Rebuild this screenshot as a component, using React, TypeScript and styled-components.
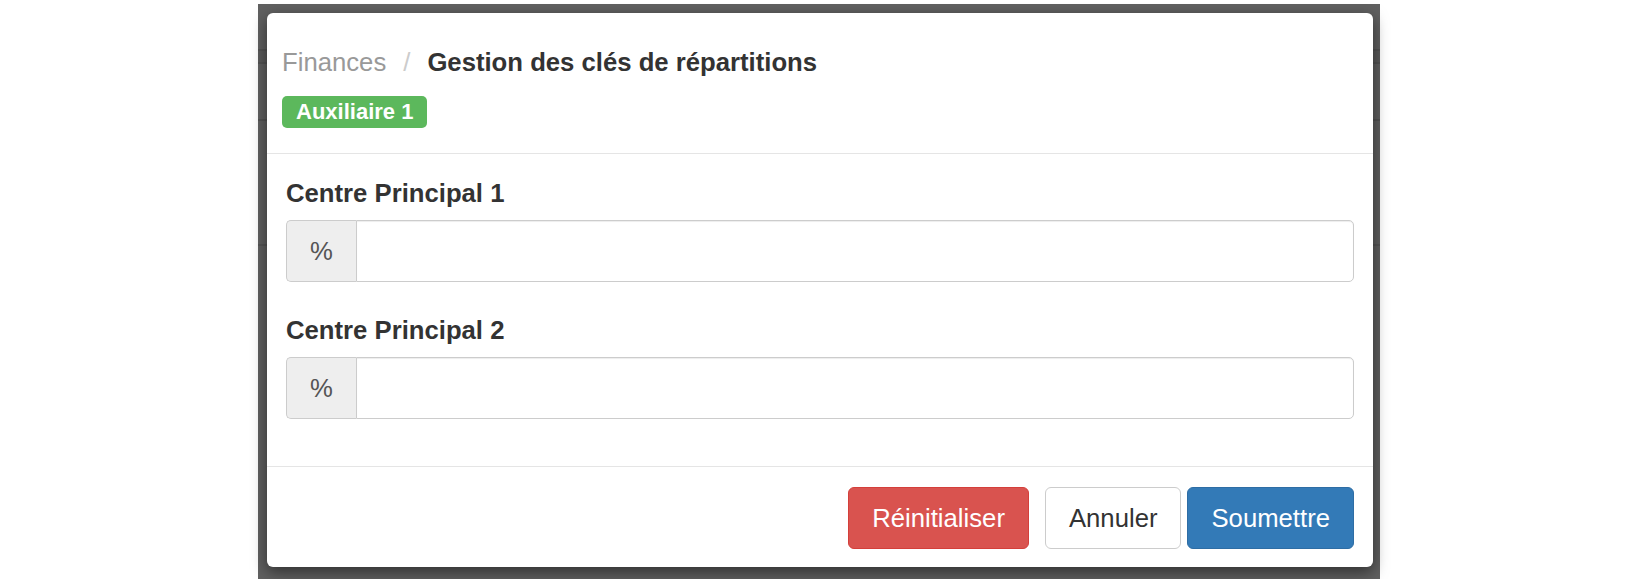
import React from 'react';
import styled, { createGlobalStyle } from 'styled-components';

const GlobalStyle = createGlobalStyle`
  html, body {
    margin: 0;
    padding: 0;
    background: #fff;
  }
  body {
    font-family: "Liberation Sans", Arial, Helvetica, sans-serif;
    color: #333;
  }
  * {
    box-sizing: border-box;
  }
`;

const Page = styled.div`
  padding: 4px 0 0 258px;
  width: 1380px;
`;

// dark backdrop with the faint lines of the page underneath
const Backdrop = styled.div`
  width: 1122px;
  height: 575px;
  padding: 9px 7px 0 9px;
  background:
    linear-gradient(to bottom,
      transparent 45px, #535353 45px, #535353 47px,
      #5a5a5a 47px, #5a5a5a 58px,
      #535353 58px, #535353 60px, transparent 60px,
      transparent 115px, #535353 115px, #535353 117px, transparent 117px,
      transparent 240px, #555 240px, #555 242px, transparent 242px),
    #606060;
`;

const Modal = styled.div`
  background: #fff;
  border-radius: 6px;
  height: 554px;
  box-shadow: 0 5px 15px rgba(0, 0, 0, 0.5);
  display: flex;
  flex-direction: column;
`;

const Header = styled.div`
  padding: 35px 15px 25px;
  border-bottom: 1px solid #e5e5e5;
`;

const Breadcrumb = styled.div`
  display: flex;
  align-items: center;
  height: 28px;
  font-size: 25.7px;
  line-height: 28px;
`;

const Crumb = styled.span<{ $active?: boolean }>`
  color: ${p => (p.$active ? '#333' : '#999')};
  font-weight: ${p => (p.$active ? 700 : 400)};
`;

const Separator = styled.span`
  color: #ccc;
  padding: 0 17px;
`;

const Badge = styled.span`
  display: inline-block;
  margin-top: 20px;
  height: 32px;
  line-height: 32px;
  padding: 0 14px;
  background: #5cb85c;
  color: #fff;
  font-size: 22px;
  font-weight: 700;
  border-radius: 5px;
`;

const Body = styled.div`
  flex: 1;
  padding: 25px 19px 0;
`;

const Field = styled.div`
  & + & {
    margin-top: 34px;
  }
`;

const Label = styled.label`
  display: block;
  font-size: 25.7px;
  line-height: 28px;
  font-weight: 700;
  color: #333;
  margin-bottom: 13px;
`;

const InputGroup = styled.div`
  display: flex;
  height: 62px;
`;

const Addon = styled.span`
  width: 70px;
  flex: none;
  display: flex;
  align-items: center;
  justify-content: center;
  background: #eee;
  border: 1px solid #ccc;
  border-right: none;
  border-radius: 5px 0 0 5px;
  color: #555;
  font-size: 25.7px;
`;

const Input = styled.input`
  flex: 1;
  min-width: 0;
  border: 1px solid #ccc;
  border-radius: 0 5px 5px 0;
  box-shadow: inset 0 1px 1px rgba(0, 0, 0, 0.075);
  font-family: inherit;
  font-size: 25.7px;
  padding: 0 17px;
  color: #555;
  outline: none;
`;

const Footer = styled.div`
  border-top: 1px solid #e5e5e5;
  padding: 20px 19px 18px;
  display: flex;
  justify-content: flex-end;
`;

const variants = {
  danger: { bg: '#d9534f', border: '#d43f3a', color: '#fff' },
  default: { bg: '#fff', border: '#ccc', color: '#333' },
  primary: { bg: '#337ab7', border: '#2e6da4', color: '#fff' },
};

const Button = styled.button<{ $variant: keyof typeof variants; $gap?: number }>`
  height: 62px;
  padding: 0 23px;
  margin-left: ${p => p.$gap ?? 0}px;
  font-family: inherit;
  font-size: 25.7px;
  border-radius: 6px;
  cursor: pointer;
  background: ${p => variants[p.$variant].bg};
  border: 1px solid ${p => variants[p.$variant].border};
  color: ${p => variants[p.$variant].color};
`;

const centres = ['Centre Principal 1', 'Centre Principal 2'];

export default function App() {
  return (
    <>
      <GlobalStyle />
      <Page>
        <Backdrop>
          <Modal>
            <Header>
              <Breadcrumb>
                <Crumb>Finances</Crumb>
                <Separator>/</Separator>
                <Crumb $active>Gestion des clés de répartitions</Crumb>
              </Breadcrumb>
              <Badge>Auxiliaire 1</Badge>
            </Header>
            <Body>
              {centres.map(name => (
                <Field key={name}>
                  <Label>{name}</Label>
                  <InputGroup>
                    <Addon>%</Addon>
                    <Input type="text" />
                  </InputGroup>
                </Field>
              ))}
            </Body>
            <Footer>
              <Button $variant="danger">Réinitialiser</Button>
              <Button $variant="default" $gap={16}>Annuler</Button>
              <Button $variant="primary" $gap={6}>Soumettre</Button>
            </Footer>
          </Modal>
        </Backdrop>
      </Page>
    </>
  );
}
